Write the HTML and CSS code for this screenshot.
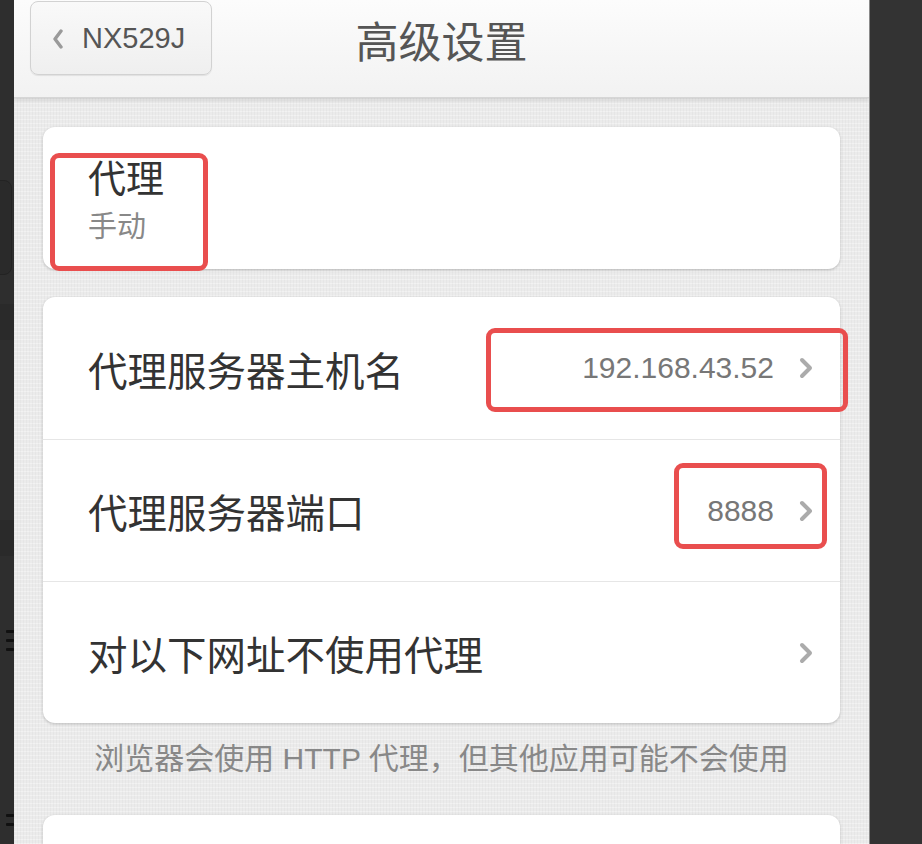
FILE: index.html
```html
<!DOCTYPE html>
<html lang="zh-CN">
<head>
<meta charset="utf-8">
<title>高级设置</title>
<link rel="stylesheet" href="styles.css">
</head>
<body>
<div class="screen">
  <div class="side-strip">
    <div class="strip-box"></div>
    <div class="strip-band band-a"></div>
    <div class="strip-band band-b"></div>
    <div class="strip-glyph glyph-a"><i></i><i></i><i></i></div>
    <div class="strip-glyph glyph-b"><i></i><i></i></div>
  </div>

  <div class="panel">
    <header class="topbar">
      <button class="back-btn">
        <svg class="back-chev" width="12" height="20" viewBox="0 0 12 20"><path d="M9 2 L3 10 L9 18" fill="none" stroke="#9a9a9a" stroke-width="3.4" stroke-linecap="round" stroke-linejoin="round"/></svg>
        <span>NX529J</span>
      </button>
      <h1 class="title">高级设置</h1>
    </header>

    <main class="content">
      <section class="card proxy-card">
        <div class="proxy-title">代理</div>
        <div class="proxy-sub">手动</div>
      </section>

      <section class="card list-card">
        <div class="row">
          <span class="label">代理服务器主机名</span>
          <span class="value">192.168.43.52</span>
          <svg class="chev" width="16" height="22" viewBox="0 0 16 22"><path d="M4 3 L12 11 L4 19" fill="none" stroke="#ababab" stroke-width="4" stroke-linecap="round" stroke-linejoin="round"/></svg>
        </div>
        <div class="row">
          <span class="label">代理服务器端口</span>
          <span class="value">8888</span>
          <svg class="chev" width="16" height="22" viewBox="0 0 16 22"><path d="M4 3 L12 11 L4 19" fill="none" stroke="#ababab" stroke-width="4" stroke-linecap="round" stroke-linejoin="round"/></svg>
        </div>
        <div class="row">
          <span class="label">对以下网址不使用代理</span>
          <svg class="chev" width="16" height="22" viewBox="0 0 16 22"><path d="M4 3 L12 11 L4 19" fill="none" stroke="#ababab" stroke-width="4" stroke-linecap="round" stroke-linejoin="round"/></svg>
        </div>
      </section>

      <p class="note">浏览器会使用 HTTP 代理，但其他应用可能不会使用</p>

      <section class="card tail-card"></section>
    </main>

    <div class="mark mark-1"></div>
    <div class="mark mark-2"></div>
    <div class="mark mark-3"></div>
  </div>

  <div class="right-side"></div>
</div>
</body>
</html>
```

FILE: styles.css
```css
* { box-sizing: border-box; }

html, body {
  margin: 0;
  padding: 0;
  height: 100%;
  overflow: hidden;
}

body {
  background: #333333;
  font-family: "Liberation Sans", "Noto Sans CJK SC", sans-serif;
}

.screen {
  display: flex;
  height: 844px;
  overflow: hidden;
}

/* left dark strip (edge of the previous screen) */
.side-strip {
  width: 14px;
  flex: none;
  background: #2e2e2e;
  position: relative;
  overflow: hidden;
}
.strip-box {
  position: absolute;
  left: -20px;
  top: 180px;
  width: 32px;
  height: 95px;
  border: 1px solid #232323;
  border-radius: 8px;
  background: #2a2a2a;
}
.strip-band {
  position: absolute;
  left: 0;
  right: 0;
  height: 36px;
  background: #2a2a2a;
}
.band-a { top: 304px; }
.band-b { top: 520px; }
.strip-glyph {
  position: absolute;
  left: 6px;
  width: 8px;
  display: flex;
  flex-direction: column;
  gap: 6px;
}
.strip-glyph i {
  display: block;
  height: 3px;
  background: #111;
  border-radius: 1px;
}
.glyph-a { top: 630px; }
.glyph-b { top: 814px; }

/* main panel */
.panel {
  width: 856px;
  height: 844px;
  flex: none;
  position: relative;
  overflow: hidden;
  background-color: #ebebeb;
  background-image:
    repeating-linear-gradient(90deg, rgba(0,0,0,0.025) 0 1px, transparent 1px 3px),
    repeating-linear-gradient(0deg, rgba(255,255,255,0.35) 0 1px, transparent 1px 4px);
  border-right: 1px solid #8a8a8a;
}

.topbar {
  height: 98px;
  position: relative;
  display: flex;
  align-items: flex-start;
  justify-content: center;
  background: linear-gradient(#fcfcfc, #f2f2f2);
  border-bottom: 1px solid #d6d6d6;
  box-shadow: 0 2px 4px rgba(0,0,0,0.12);
}

.back-btn {
  position: absolute;
  left: 16px;
  top: 1px;
  width: 182px;
  height: 74px;
  display: flex;
  align-items: center;
  gap: 18px;
  padding: 0 0 0 21px;
  border: 1px solid #d2d2d2;
  border-radius: 8px;
  background: linear-gradient(#f9f9f9, #efefef);
  box-shadow: 0 1px 1px rgba(0,0,0,0.08);
  font-family: "Liberation Sans", sans-serif;
  font-size: 29px;
  color: #555;
}
.back-chev { margin-top: 2px; }

.title {
  margin: 0;
  padding-top: 14px;
  font-family: "Noto Sans CJK SC", sans-serif;
  font-weight: 400;
  font-size: 43px;
  line-height: 50px;
  color: #555;
}

.content {
  padding: 29px 29px 0 29px;
}

.card {
  background: #fff;
  border-radius: 12px;
  box-shadow: 0 1px 3px rgba(0,0,0,0.22);
}

.proxy-card {
  height: 142px;
  padding: 26px 0 0 45px;
  font-family: "Noto Sans CJK SC", sans-serif;
}
.proxy-title {
  font-size: 38px;
  line-height: 46px;
  color: #333;
}
.proxy-sub {
  margin-top: 6px;
  font-size: 29px;
  line-height: 38px;
  color: #888;
}

.list-card {
  margin-top: 28px;
}
.row {
  height: 142px;
  display: flex;
  align-items: center;
  padding: 0 26px 0 45px;
  border-top: 1px solid #e6e6e6;
}
.row:first-child {
  border-top: none;
}
.label {
  flex: 1;
  font-family: "Noto Sans CJK SC", sans-serif;
  font-size: 39.5px;
  color: #333;
}
.value {
  font-family: "Liberation Sans", sans-serif;
  font-size: 30px;
  color: #777;
  margin-right: 24px;
}
.chev { flex: none; }

.note {
  margin: 14px 0 0 0;
  text-align: center;
  font-family: "Liberation Sans", "Noto Sans CJK SC", sans-serif;
  font-size: 30px;
  line-height: 44px;
  color: #888;
}

.tail-card {
  margin-top: 34px;
  height: 60px;
}

/* annotation boxes drawn over the screenshot */
.mark {
  position: absolute;
  border: 5px solid #e94e4e;
  border-radius: 9px;
}
.mark-1 { left: 36px; top: 153px; width: 158px; height: 118px; }
.mark-2 { left: 472px; top: 328px; width: 362px; height: 84px; }
.mark-3 { left: 660px; top: 463px; width: 153px; height: 86px; }

.right-side {
  flex: 1;
  background: #333333;
}
```
